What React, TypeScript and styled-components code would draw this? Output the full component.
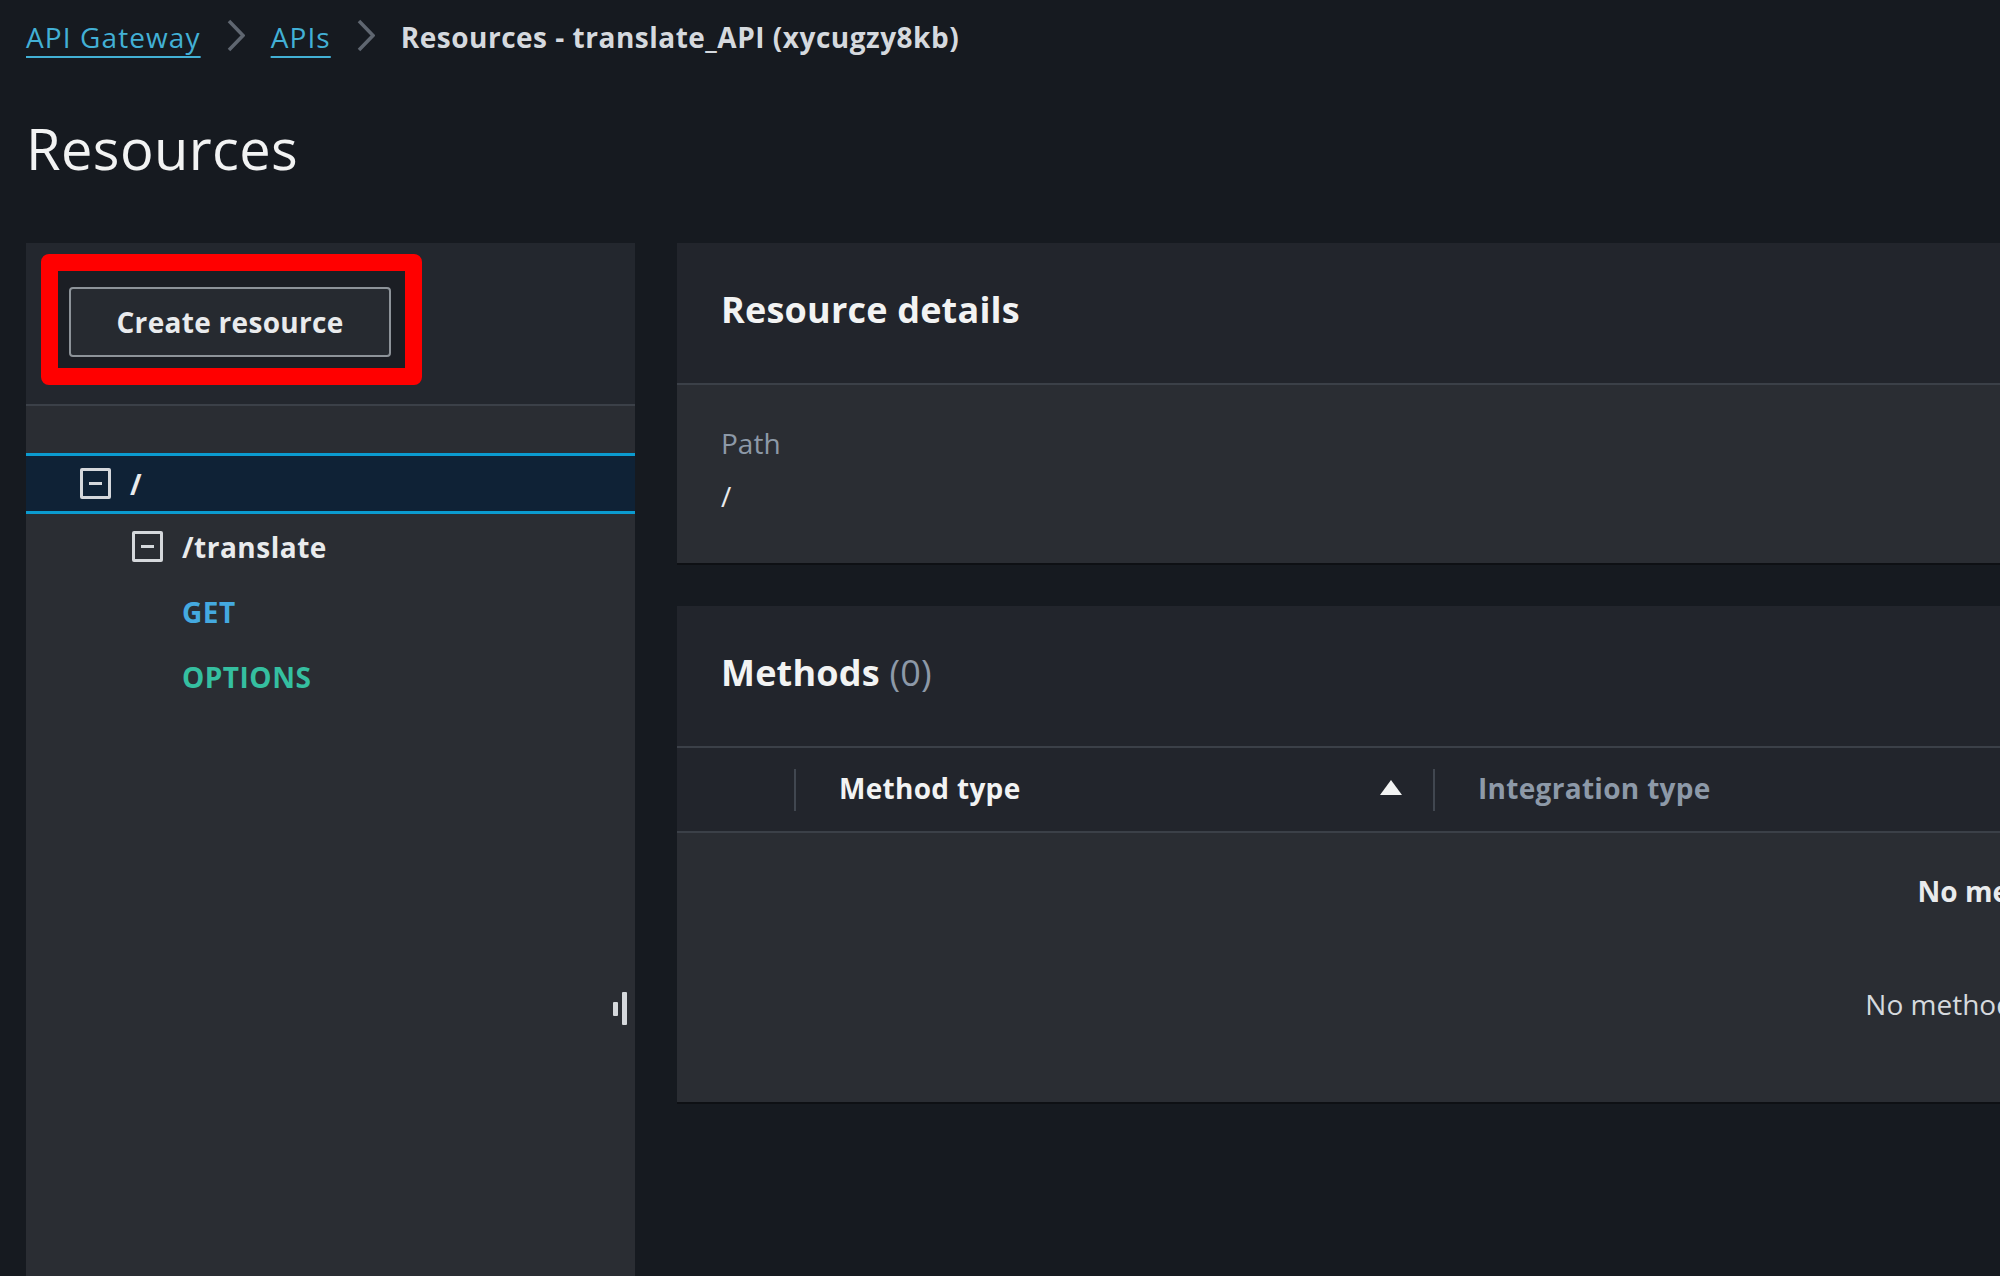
import * as React from 'react';
import styled, { createGlobalStyle } from 'styled-components';

const GlobalStyle = createGlobalStyle`
  html, body {
    margin: 0;
    padding: 0;
    background: #161a20;
    overflow: hidden;
  }
  body {
    font-family: 'Open Sans', 'Noto Sans', sans-serif;
    color: #e9ebed;
  }
`;

const Page = styled.div`
  padding: 17px 0 0 26px;
  height: 1276px;
  box-sizing: border-box;
`;

const Breadcrumbs = styled.nav`
  display: flex;
  align-items: center;
  gap: 26px;
  height: 40px;
  font-size: 28px;
  line-height: 40px;
`;

const CrumbLink = styled.a`
  color: #42b0d5;
  letter-spacing: 1.1px;
  text-decoration: underline;
  text-decoration-thickness: 2px;
  text-underline-offset: 8px;
`;

const CrumbCurrent = styled.span`
  color: #d5d9de;
  font-weight: 700;
  letter-spacing: 0.5px;
`;

const Chevron = styled.svg`
  width: 18px;
  height: 33px;
  margin-top: -3px;
  flex: none;
`;

const Title = styled.h1`
  margin: 58px 0 0;
  font-size: 56px;
  line-height: 67px;
  font-weight: 400;
  letter-spacing: 0.4px;
  color: #f2f3f3;
`;

const Layout = styled.div`
  display: grid;
  grid-template-columns: 609px 2652px;
  column-gap: 42px;
  align-items: start;
  margin-top: 61px;
`;

const SidePanel = styled.aside`
  position: relative;
  background: #2a2d33;
  min-height: 1100px;
`;

const SideHeader = styled.div`
  background: #23272e;
  height: 163px;
  box-sizing: border-box;
  padding: 11px 0 0 15px;
  border-bottom: 2px solid #3b4048;
`;

const Highlight = styled.div`
  display: inline-block;
  border: 17px solid #ff0000;
  border-radius: 8px;
  padding: 16px 14px 11px 11px;
  background: #1b1e24;
`;

const OutlineButton = styled.button`
  width: 322px;
  height: 70px;
  border: 2px solid #8d9399;
  border-radius: 4px;
  background: #262a30;
  color: #e9ebed;
  font-family: inherit;
  font-size: 28px;
  font-weight: 700;
  letter-spacing: 0.3px;
  cursor: pointer;
`;

const Tree = styled.div`
  padding-top: 47px;
`;

const TreeRow = styled.div<{ level: number; selected?: boolean; leaf?: boolean }>`
  display: flex;
  align-items: center;
  gap: 19px;
  box-sizing: border-box;
  height: ${({ selected }) => (selected ? '61px' : '65px')};
  padding-left: ${({ level, leaf }) => 54 + level * 52 - (leaf ? 2 : 0)}px;
  background: ${({ selected }) => (selected ? '#0f2236' : 'transparent')};
  border-top: ${({ selected }) => (selected ? '3px solid #0b9bd0' : 'none')};
  border-bottom: ${({ selected }) => (selected ? '3px solid #0b9bd0' : 'none')};
`;

const CollapseBox = styled.span`
  display: flex;
  align-items: center;
  justify-content: center;
  width: 31px;
  height: 31px;
  box-sizing: border-box;
  border: 3px solid #d5d8dc;
  border-radius: 2px;

  &::after {
    content: '';
    width: 13px;
    height: 3px;
    background: #d5d8dc;
  }
`;

const NodeLabel = styled.span<{ tone?: 'path' | 'get' | 'options' }>`
  font-size: 28px;
  line-height: 40px;
  font-weight: 700;
  letter-spacing: 0.5px;
  color: ${({ tone }) =>
    tone === 'get' ? '#44a9e0' : tone === 'options' ? '#35bfa0' : '#e9ebed'};
`;

const Splitter = styled.div`
  position: absolute;
  top: 749px;
  right: 8px;
  height: 33px;
  display: flex;
  align-items: center;
  gap: 4px;

  span {
    width: 5px;
    background: #d5d8dc;
    border-radius: 1px;
  }
  span:first-child {
    height: 14px;
  }
  span:last-child {
    height: 33px;
  }
`;

const MainColumn = styled.div`
  display: flex;
  flex-direction: column;
  gap: 43px;
`;

const Card = styled.section`
  background: #2a2d33;
  box-shadow: 0 2px 0 #0e1014;
`;

const CardHeader = styled.div`
  background: #22252c;
  padding: 43px 44px 49px;
  border-bottom: 2px solid #3b4048;
`;

const CardTitle = styled.h2`
  margin: 0;
  font-size: 36px;
  line-height: 48px;
  font-weight: 700;
  letter-spacing: 0.2px;
  color: #f2f3f3;
`;

const Counter = styled.span`
  font-weight: 400;
  color: #8d99a8;
`;

const DetailBody = styled.div`
  padding: 38px 44px 47px;
`;

const FieldLabel = styled.div`
  font-size: 28px;
  line-height: 40px;
  color: #8d99a8;
`;

const FieldValue = styled.div`
  margin-top: 13px;
  font-size: 28px;
  line-height: 40px;
  color: #e9ebed;
`;

const TableHeader = styled.div`
  display: flex;
  align-items: center;
  height: 83px;
  background: #22252c;
  border-bottom: 2px solid #3b4048;
`;

const SelectColumn = styled.div`
  width: 117px;
  flex: none;
`;

const ColumnRule = styled.div`
  width: 2px;
  height: 42px;
  background: #414750;
  flex: none;
`;

const HeaderCell = styled.div<{ width?: number; muted?: boolean }>`
  display: flex;
  align-items: center;
  justify-content: space-between;
  box-sizing: border-box;
  width: ${({ width }) => (width ? `${width}px` : 'auto')};
  flex: ${({ width }) => (width ? 'none' : '1')};
  padding: 0 31px 4px 43px;
  font-size: 28px;
  line-height: 40px;
  font-weight: 700;
  letter-spacing: 0.3px;
  color: ${({ muted }) => (muted ? '#8d99a8' : '#f2f3f3')};
`;

const EmptyState = styled.div`
  padding: 38px 0 78px;
  text-align: center;
  font-size: 28px;
  line-height: 40px;
`;

const EmptyTitle = styled.div`
  font-weight: 700;
  color: #e9ebed;
`;

const EmptyText = styled.div`
  margin-top: 73px;
  color: #d5d9de;
`;

const CrumbChevron = () => (
  <Chevron viewBox="0 0 18 33" fill="none">
    <polyline points="2,2 16,16.5 2,31" stroke="#5f6670" strokeWidth="3.5" />
  </Chevron>
);

const SortUp = () => (
  <svg width="22" height="15" viewBox="0 0 22 15">
    <polygon points="11,0 22,15 0,15" fill="#f2f3f3" />
  </svg>
);

export default function App() {
  return (
    <Page>
      <GlobalStyle />
      <Breadcrumbs>
        <CrumbLink href="#">API Gateway</CrumbLink>
        <CrumbChevron />
        <CrumbLink href="#">APIs</CrumbLink>
        <CrumbChevron />
        <CrumbCurrent>Resources - translate_API (xycugzy8kb)</CrumbCurrent>
      </Breadcrumbs>

      <Title>Resources</Title>

      <Layout>
        <SidePanel>
          <SideHeader>
            <Highlight>
              <OutlineButton>Create resource</OutlineButton>
            </Highlight>
          </SideHeader>
          <Tree>
            <TreeRow level={0} selected>
              <CollapseBox />
              <NodeLabel>/</NodeLabel>
            </TreeRow>
            <TreeRow level={1}>
              <CollapseBox />
              <NodeLabel>/translate</NodeLabel>
            </TreeRow>
            <TreeRow level={2} leaf>
              <NodeLabel tone="get">GET</NodeLabel>
            </TreeRow>
            <TreeRow level={2} leaf>
              <NodeLabel tone="options">OPTIONS</NodeLabel>
            </TreeRow>
          </Tree>
          <Splitter>
            <span />
            <span />
          </Splitter>
        </SidePanel>

        <MainColumn>
          <Card>
            <CardHeader>
              <CardTitle>Resource details</CardTitle>
            </CardHeader>
            <DetailBody>
              <FieldLabel>Path</FieldLabel>
              <FieldValue>/</FieldValue>
            </DetailBody>
          </Card>

          <Card>
            <CardHeader>
              <CardTitle>
                Methods <Counter>(0)</Counter>
              </CardTitle>
            </CardHeader>
            <TableHeader>
              <SelectColumn />
              <ColumnRule />
              <HeaderCell width={637}>
                Method type
                <SortUp />
              </HeaderCell>
              <ColumnRule />
              <HeaderCell muted>Integration type</HeaderCell>
            </TableHeader>
            <EmptyState>
              <EmptyTitle>No methods</EmptyTitle>
              <EmptyText>No methods defined.</EmptyText>
            </EmptyState>
          </Card>
        </MainColumn>
      </Layout>
    </Page>
  );
}
